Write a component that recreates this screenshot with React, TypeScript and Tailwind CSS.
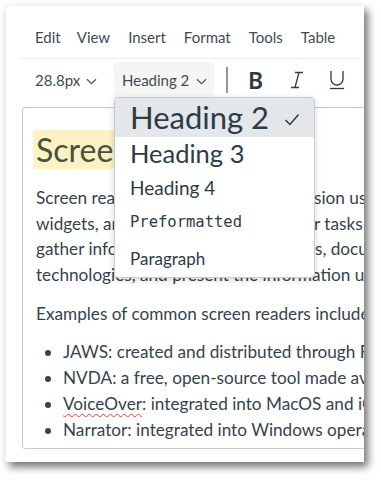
import React from "react";

const font = { fontFamily: "Lato, 'Noto Sans', sans-serif" };

function Chevron({ className = "" }: { className?: string }) {
  return (
    <svg width="11" height="7" viewBox="0 0 11 7" className={className}>
      <path d="M1 1.2 L5.5 5.6 L10 1.2" fill="none" stroke="#4a5660" strokeWidth="1.2" />
    </svg>
  );
}

export default function App() {
  return (
    <div className="w-[381px] h-[480px] bg-white overflow-hidden text-[#34434d]" style={font}>
      <div className="ml-[5px] mt-[5px] w-[359px] h-[457px] bg-white relative overflow-hidden border-l border-t border-[#f0f0f0] shadow-[4px_5px_8px_rgba(0,0,0,0.55)]">
        {/* menu bar */}
        <div className="flex pl-[29px] pt-[22px] text-[15px] leading-[18px] text-[#3f4b55]">
          <span className="mr-[16px]">Edit</span>
          <span className="mr-[18px]">View</span>
          <span className="mr-[18px]">Insert</span>
          <span className="mr-[18px]">Format</span>
          <span className="mr-[18px]">Tools</span>
          <span>Table</span>
        </div>
        <div className="ml-[15px] mt-[12px] h-px bg-[#eceff1]" />
        {/* toolbar */}
        <div className="flex items-center h-[36px] mt-[3px] text-[15px] text-[#3f4b55]">
          <div className="flex items-center pl-[29px] w-[108px]">
            <span>28.8px</span>
            <Chevron className="ml-[6px] mt-[2px]" />
          </div>
          <div className="flex items-center h-full w-[100px] bg-[#f5f5f5] pl-[8px]">
            <span>Heading 2</span>
            <Chevron className="ml-[7px] mt-[2px]" />
          </div>
          <div className="ml-[12px] w-[2px] h-[26px] bg-[#8d979e]" />
          <span className="ml-[20px] text-[23px] font-semibold text-[#2d3b45] leading-none" style={{ fontFamily: "'Noto Sans', sans-serif" }}>B</span>
          <svg width="16" height="18" viewBox="0 0 16 18" className="ml-[26px]">
            <path d="M6 1.5 H14 M2 16.5 H10 M10 1.5 L6 16.5" fill="none" stroke="#2d3b45" strokeWidth="1.3" />
          </svg>
          <svg width="16" height="20" viewBox="0 0 16 20" className="ml-[24px]">
            <path d="M2 1 V9 A6 6 0 0 0 14 9 V1" fill="none" stroke="#2d3b45" strokeWidth="1.3" />
            <path d="M1 18.5 H15" stroke="#2d3b45" strokeWidth="1.3" />
          </svg>
        </div>
        {/* content box */}
        <div className="ml-[16px] mt-[9px] w-[420px] h-[342px] border border-[#c5ccd1] rounded-[3px] pl-[13px] pt-[22px] text-[17.2px] leading-[25.5px] text-[#34434d]">
          <div className="text-[32px] leading-[40px] text-[#48533f]">
            <span className="bg-[#fdf2c4] -ml-[3px] pl-[3px]">Screen Readers</span>
          </div>
          <div className="mt-[15px] whitespace-nowrap">
            <div className="flex">
              <span className="w-[278px] shrink-0 overflow-hidden">Screen readers allow blind and low-vi</span>
              <span>sion users to</span>
            </div>
            <div className="flex">
              <span className="w-[278px] shrink-0 overflow-hidden">widgets, and pages to accomplish thei</span>
              <span>r tasks and</span>
            </div>
            <div className="flex">
              <span className="w-[279px] shrink-0 overflow-hidden">gather information from their website</span>
              <span>s, documents,</span>
            </div>
            <div>technologies, and present the information using</div>
          </div>
          <div className="mt-[14px] whitespace-nowrap">Examples of common screen readers include:</div>
          <ul className="mt-[12px] whitespace-nowrap list-disc pl-[27px] leading-[26px]">
            <li>JAWS: created and distributed through Freedom Scientific</li>
            <li>NVDA: a free, open-source tool made available by NV Access</li>
            <li>
              <span className="underline decoration-wavy decoration-[#e0403a] decoration-1 underline-offset-[3px]">VoiceOver</span>: integrated into MacOS and iOS
            </li>
            <li>Narrator: integrated into Windows operating system</li>
          </ul>
        </div>
        {/* dropdown */}
        <div className="absolute left-[108px] top-[91px] w-[201px] h-[181px] bg-white border border-[#c5ccd1] rounded-[4px] shadow-[0_2px_7px_rgba(0,0,0,0.15)] overflow-hidden text-[#2d3b45]">
          <div className="h-[39px] bg-[#e4e7e9] flex items-center pl-[15px] pr-[12px]">
            <span className="text-[31px] leading-none">Heading 2</span>
            <svg width="16" height="13" viewBox="0 0 16 13" className="ml-auto mr-[2px] mt-[4px]">
              <path d="M1.5 7 L6 11.5 L14.5 1.5" fill="none" stroke="#2d3b45" strokeWidth="1.5" />
            </svg>
          </div>
          <div className="h-[33px] flex items-center pl-[15px] text-[25.5px] leading-none">Heading 3</div>
          <div className="h-[35px] flex items-center pl-[15px] text-[19px] leading-none">Heading 4</div>
          <div className="h-[35px] flex items-center pl-[15px] text-[15.5px] leading-none" style={{ fontFamily: "'DejaVu Sans Mono', monospace" }}>Preformatted</div>
          <div className="h-[36px] flex items-center pl-[15px] text-[17px] leading-none">Paragraph</div>
        </div>
      </div>
    </div>
  );
}
